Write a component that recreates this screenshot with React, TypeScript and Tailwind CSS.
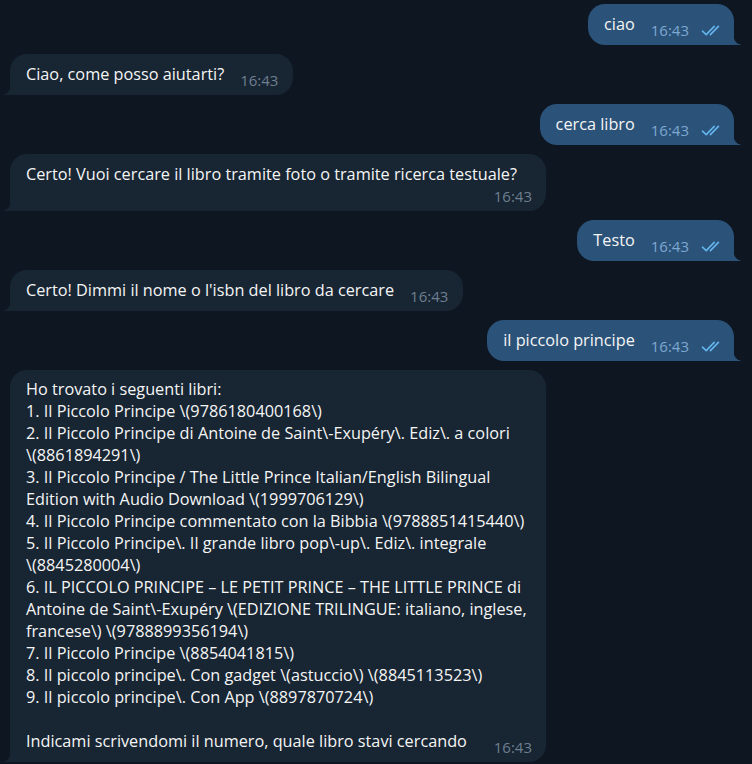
const TIME = "16:43";

const bookLines = [
  "Ho trovato i seguenti libri:",
  "1. Il Piccolo Principe \\(9786180400168\\)",
  "2. Il Piccolo Principe di Antoine de Saint\\-Exupéry\\. Ediz\\. a colori",
  "\\(8861894291\\)",
  "3. Il Piccolo Principe / The Little Prince Italian/English Bilingual",
  "Edition with Audio Download \\(1999706129\\)",
  "4. Il Piccolo Principe commentato con la Bibbia \\(9788851415440\\)",
  "5. Il Piccolo Principe\\. Il grande libro pop\\-up\\. Ediz\\. integrale",
  "\\(8845280004\\)",
  "6. IL PICCOLO PRINCIPE – LE PETIT PRINCE – THE LITTLE PRINCE di",
  "Antoine de Saint\\-Exupéry \\(EDIZIONE TRILINGUE: italiano, inglese,",
  "francese\\) \\(9788899356194\\)",
  "7. Il Piccolo Principe \\(8854041815\\)",
  "8. Il piccolo principe\\. Con gadget \\(astuccio\\) \\(8845113523\\)",
  "9. Il piccolo principe\\. Con App \\(8897870724\\)",
  "",
];

function Checks() {
  return (
    <svg
      width="22"
      height="11"
      viewBox="0 0 22 11"
      fill="none"
      stroke="#64b5ef"
      strokeWidth="1.6"
      strokeLinecap="round"
      strokeLinejoin="round"
      className="ml-3 mt-[12px] shrink-0"
    >
      <path d="M1.5 6.2 L5.2 9.6 L13.2 1.4" />
      <path d="M9.4 9.6 L17.4 1.4" />
    </svg>
  );
}

function TailIn() {
  return (
    <svg
      width="8"
      height="13"
      viewBox="0 0 8 13"
      className="absolute bottom-0 left-[-7px]"
    >
      <path d="M8 0 C8 7 5.5 11.5 0.5 12.6 C0.2 12.7 0 13 0.6 13 L8 13 Z" fill="#182533" />
    </svg>
  );
}

function TailOut() {
  return (
    <svg
      width="8"
      height="13"
      viewBox="0 0 8 13"
      className="absolute bottom-0 right-[-7px]"
    >
      <path d="M0 0 C0 7 2.5 11.5 7.5 12.6 C7.8 12.7 8 13 7.4 13 L0 13 Z" fill="#2b5278" />
    </svg>
  );
}

function Outgoing({ text }: { text: string }) {
  return (
    <div className="relative flex items-start self-end rounded-[17px] rounded-br-none bg-[#2b5278] pb-[7px] pl-4 pr-[11px] pt-[9px]">
      <span className="whitespace-nowrap">{text}</span>
      <span className="ml-4 mt-[9px] text-[15px] leading-[16px] text-[#7da8d3]">{TIME}</span>
      <Checks />
      <TailOut />
    </div>
  );
}

function Incoming({ text }: { text: string }) {
  return (
    <div className="relative flex items-start self-start rounded-[17px] rounded-bl-none bg-[#182533] pb-[7px] pl-4 pr-[15px] pt-[9px]">
      <span className="whitespace-nowrap">{text}</span>
      <span className="ml-4 mt-[9px] text-[15px] leading-[16px] text-[#6d7f8f]">{TIME}</span>
      <TailIn />
    </div>
  );
}

export default function App() {
  return (
    <div className="flex h-[764px] flex-col gap-[9px] overflow-hidden bg-[#0e1621] pl-[10px] pr-[18px] pt-[4px] font-['Open_Sans',sans-serif] text-[16.25px] leading-[22px] text-[#f5f5f5]">
      <Outgoing text="ciao" />
      <Incoming text="Ciao, come posso aiutarti?" />
      <Outgoing text="cerca libro" />

      <div className="relative flex w-[536px] flex-col self-start rounded-[17px] rounded-bl-none bg-[#182533] pb-[7px] pl-4 pr-[14px] pt-[9px]">
        <span className="whitespace-nowrap">
          Certo! Vuoi cercare il libro tramite foto o tramite ricerca testuale?
        </span>
        <span className="mt-[3px] self-end text-[15px] leading-[16px] text-[#6d7f8f]">{TIME}</span>
        <TailIn />
      </div>

      <Outgoing text="Testo" />
      <Incoming text="Certo! Dimmi il nome o l'isbn del libro da cercare" />
      <Outgoing text="il piccolo principe" />

      <div className="relative flex w-[536px] shrink-0 flex-col self-start rounded-[17px] rounded-bl-none bg-[#182533] pb-[7px] pl-4 pr-[14px] pt-[8px]">
        {bookLines.map((line, i) => (
          <div key={i} className="h-[22px] whitespace-nowrap">
            {line}
          </div>
        ))}
        <div className="flex items-start">
          <span className="whitespace-nowrap">
            Indicami scrivendomi il numero, quale libro stavi cercando
          </span>
          <span className="ml-auto mt-[9px] text-[15px] leading-[16px] text-[#6d7f8f]">{TIME}</span>
        </div>
        <TailIn />
      </div>
    </div>
  );
}
